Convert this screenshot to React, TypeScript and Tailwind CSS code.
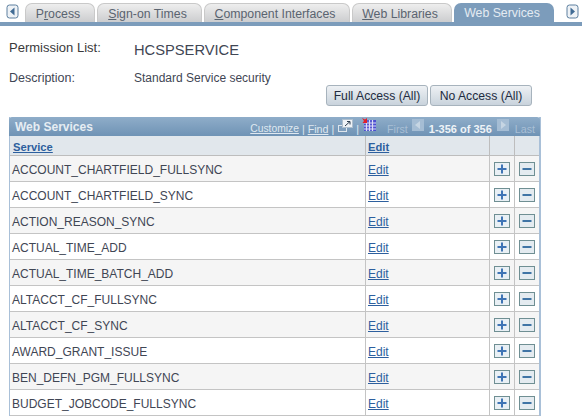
const rows = ["ACCOUNT_CHARTFIELD_FULLSYNC","ACCOUNT_CHARTFIELD_SYNC","ACTION_REASON_SYNC","ACTUAL_TIME_ADD","ACTUAL_TIME_BATCH_ADD","ALTACCT_CF_FULLSYNC","ALTACCT_CF_SYNC","AWARD_GRANT_ISSUE","BEN_DEFN_PGM_FULLSYNC","BUDGET_JOBCODE_FULLSYNC"];

function Tab({ first, rest, pre = "", w, active = false }: { first: string; rest: string; pre?: string; w: string; active?: boolean }) {
  return (
    <div className={`${w} h-[19px] shrink-0 rounded-t-[7px] text-[12.3px] leading-[20px] text-center pr-[4px] ${active ? "bg-[#7c9cbb] text-[#e4ebf2]" : "bg-gradient-to-b from-[#eeeeee] to-[#cccdcf] border border-b-0 border-[#c9c9c9] text-[#5a6470]"}`}>
      {pre}<span className={active ? "" : "underline"}>{first}</span>{rest}
    </div>
  );
}

function Arrow({ right = false }: { right?: boolean }) {
  return (
    <svg width="13" height="15" viewBox="0 0 13 15" className="shrink-0">
      <rect x="1" y="1" width="11" height="13" rx="2.5" fill="#eef2f6" stroke="#5c7f9f" strokeWidth="1" />
      <path d={right ? "M4.5 3.5 L9 7.5 L4.5 11.5 Z" : "M8.5 3.5 L4 7.5 L8.5 11.5 Z"} fill="#3f6a94" />
    </svg>
  );
}

function SquareBtn({ plus = false }: { plus?: boolean }) {
  return (
    <svg width="16" height="14" viewBox="0 0 16 14">
      <rect x="0.5" y="0.5" width="15" height="13" fill={plus ? "#e9f0f5" : "#e4ebf0"} stroke="#6f8f93" />
      {plus ? <path d="M8 2.5V11.5M3.5 7H12.5" stroke="#3f74b5" strokeWidth="2" /> : <path d="M3.5 7H12.5" stroke="#3f74a5" strokeWidth="2" />}
    </svg>
  );
}

function PageArrow({ right = false }: { right?: boolean }) {
  return (
    <svg width="12" height="12" viewBox="0 0 12 12" className="shrink-0 mt-[2px]">
      <rect width="12" height="12" fill="#a5bdd4" />
      <path d={right ? "M4 2 L9 6 L4 10 Z" : "M8 2 L3 6 L8 10 Z"} fill="#c6d5e3" />
    </svg>
  );
}

export default function App() {
  return (
    <div className="w-[582px] h-[418px] overflow-hidden bg-white font-['Liberation_Sans',Arial,sans-serif] text-[#333]">
      <div className="h-[26px] border-b-[4px] border-[#7c9cbb]">
        <div className="flex items-end h-[22px]">
          <div className="pl-[6px] pr-[6px] pb-[3px]"><Arrow /></div>
          <div className="flex items-end gap-[2px]">
            <Tab pre="P" first="r" rest="ocess" w="w-[70px]" />
            <Tab first="S" rest="ign-on Times" w="w-[105px]" />
            <Tab first="C" rest="omponent Interfaces" w="w-[146px]" />
            <Tab first="W" rest="eb Libraries" w="w-[100px]" />
            <Tab first="Web Services" rest="" w="w-[100px]" active />
          </div>
          <div className="pl-[12px] pb-[3px]"><Arrow right /></div>
        </div>
      </div>

      <div className="flex items-center h-[20px] mt-[12px] pl-[9px]">
        <span className="w-[125px] text-[13px] text-[#3a3a3a]">Permission List:</span>
        <span className="text-[14.7px] mt-[5px] text-[#3f4654]">HCSPSERVICE</span>
      </div>

      <div className="flex items-center h-[16px] mt-[11px] pl-[9px]">
        <span className="w-[125px] text-[12.5px] mt-[2px] text-[#3f4654]">Description:</span>
        <span className="text-[12px] mt-[2px] text-[#3f4654]">Standard Service security</span>
      </div>

      <div className="flex justify-end gap-[2px] pr-[50px] h-[22px]">
        <div className="w-[102px] h-[21px] rounded-[3px] border border-[#a7b3bd] bg-gradient-to-b from-[#eef1f4] to-[#c9d3dc] text-[12.2px] leading-[21px] text-center text-[#222b40]">Full Access (All)</div>
        <div className="w-[102px] h-[21px] rounded-[3px] border border-[#a7b3bd] bg-gradient-to-b from-[#eef1f4] to-[#c9d3dc] text-[12.2px] leading-[21px] text-center text-[#222b40]">No Access (All)</div>
      </div>

      <div className="ml-[9px] mt-[10px] w-[532px] border-r-2 border-l border-[#a9c0d8]">
        <div className="h-[19px] -ml-[1px] -mr-[1px] rounded-t-[3px] bg-gradient-to-b from-[#8fadc9] to-[#6f93b5] flex items-start pl-[6px] pr-[5px]">
          <span className="font-bold text-[12px] leading-[21px] text-[#e6edf3]">Web Services</span>
          <div className="ml-auto flex items-start text-[10.7px] leading-[12px] text-[#dfe8f0]">
            <span className="underline mt-[6px] text-[10.3px]">Customize</span><span className="mx-[3px] mt-[6px]">|</span>
            <span className="underline mt-[6px]">Find</span><span className="ml-[3px] mr-[4px] mt-[6px]">|</span>
            <svg width="15" height="13" viewBox="0 0 15 13" className="mt-[2px]">
              <rect x="0.5" y="6.5" width="8" height="6" fill="#7f9fbe" stroke="#dde5ec" />
              <rect x="4.5" y="0.5" width="10" height="8" fill="#eef2f6" stroke="#aebfce" />
              <path d="M7 7 L12 2.5 M9 2.5 H12 V5.5" stroke="#2f3f50" fill="none" />
            </svg>
            <span className="mx-[3px] mt-[6px]">|</span>
            <svg width="14" height="14" viewBox="0 0 14 14" className="mt-[1px] mr-[11px]">
              <rect x="2" y="2" width="12" height="11" fill="#4c4fd0" />
              <path d="M4.5 2V13M7.5 2V13M10.5 2V13M2 5H14M2 8H14M2 11H14" stroke="#dcdcf5" strokeWidth="1.2" />
              <path d="M0 0L3 1.5L5 0V5H0.5L2 3Z" fill="#e0202c" />
            </svg>
            <span className="text-[#a9bfd5] mr-[4px] mt-[6px]">First</span>
            <PageArrow />
            <span className="font-bold text-[11px] mx-[5px] mt-[6px] text-[#eef3f7]">1-356 of 356</span>
            <PageArrow right />
            <span className="text-[#a9bfd5] ml-[6px] mt-[6px]">Last</span>
          </div>
        </div>

        <div className="grid grid-cols-[355px_124px_25px_25px]">
          <div className="h-[20px] bg-[#e1e7ec] border-b border-[#bdbdbd] pl-[3px] text-[11.2px] font-bold leading-[22px] text-[#2d5f9e] underline">Service</div>
          <div className="h-[20px] bg-[#e1e7ec] border-b border-l border-[#bdbdbd] pl-[2px] text-[11.2px] font-bold leading-[22px] text-[#2d5f9e] underline">Edit</div>
          <div className="h-[20px] bg-[#e1e7ec] border-b border-l border-[#bdbdbd]" />
          <div className="h-[20px] bg-[#e1e7ec] border-b border-l border-[#bdbdbd]" />
          {rows.map((r, i) => {
            const bg = i % 2 === 0 ? "bg-[#f5f5f5]" : "bg-white";
            return [
              <div key={r + "a"} className={`h-[26px] ${bg} border-b border-[#c4c4c4] pl-[2px] text-[12px] leading-[29px] text-[#3f4654] whitespace-nowrap`}>{r}</div>,
              <div key={r + "b"} className={`h-[26px] ${bg} border-b border-l border-[#c4c4c4] pl-[2px] text-[12px] leading-[29px] text-[#2d5f9e] underline`}>Edit</div>,
              <div key={r + "c"} className={`h-[26px] ${bg} border-b border-l border-[#c4c4c4] pl-[4px] pt-[6px]`}><SquareBtn plus /></div>,
              <div key={r + "d"} className={`h-[26px] ${bg} border-b border-l border-[#c4c4c4] pl-[4px] pt-[6px]`}><SquareBtn /></div>,
            ];
          })}
        </div>
      </div>
    </div>
  );
}
